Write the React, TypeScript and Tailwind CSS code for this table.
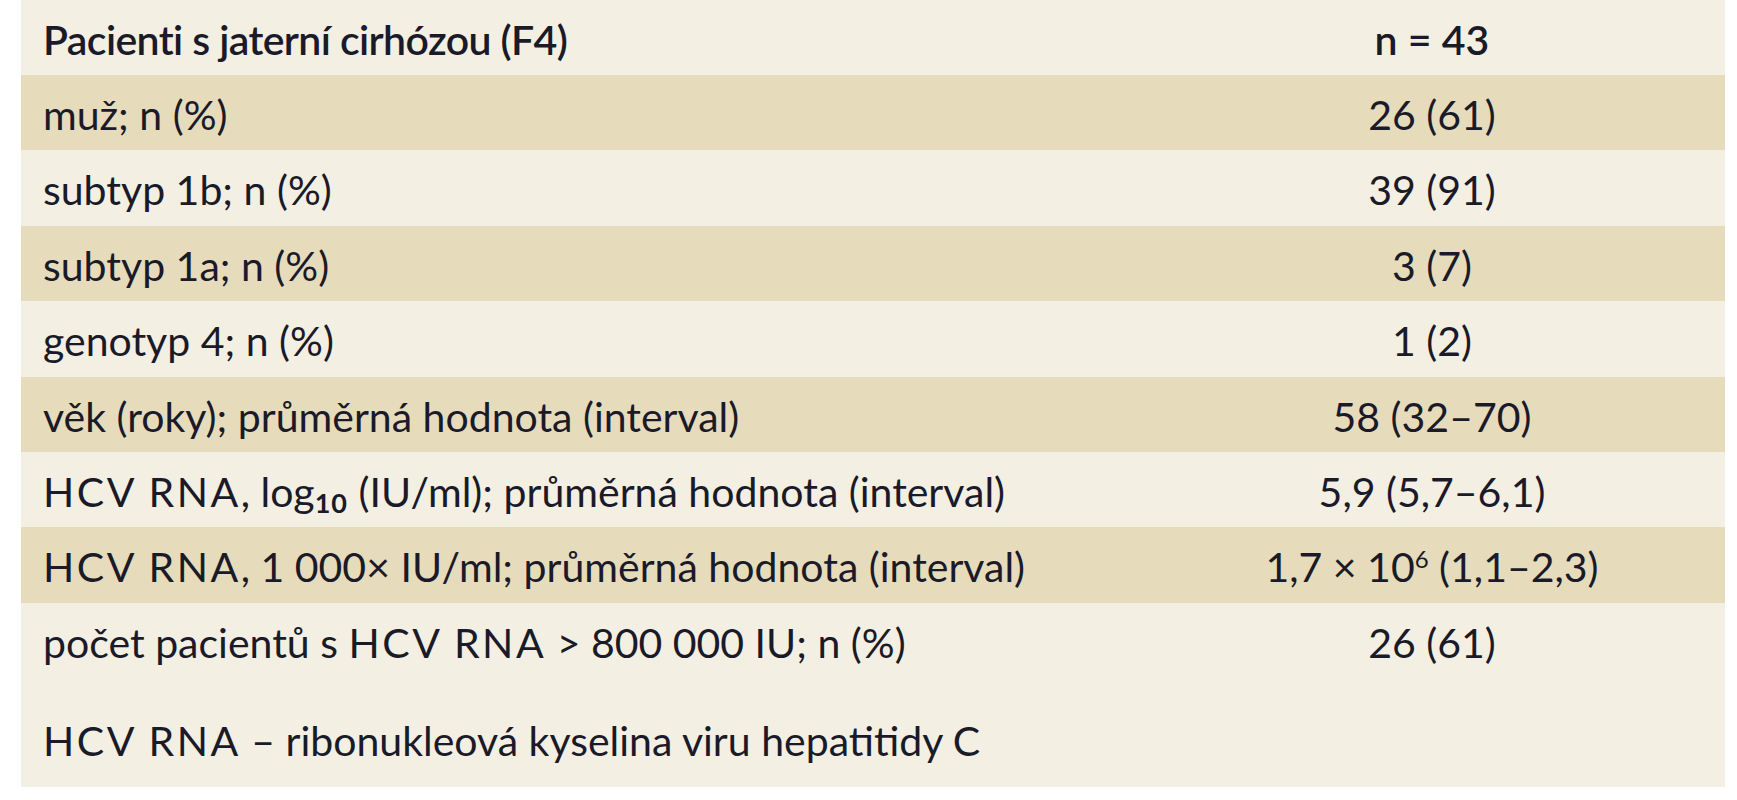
import React from 'react';

interface Row {
  label: React.ReactNode;
  value: React.ReactNode;
}

const rows: Row[] = [
  { label: 'muž; n (%)', value: '26 (61)' },
  { label: 'subtyp 1b; n (%)', value: '39 (91)' },
  { label: 'subtyp 1a; n (%)', value: '3 (7)' },
  { label: 'genotyp 4; n (%)', value: '1 (2)' },
  { label: 'věk (roky); průměrná hodnota (interval)', value: '58 (32–70)' },
  {
    label: (
      <>
        <span className="tracking-[2.5px]">HCV RNA</span>, log<sub className="text-[27px] font-bold align-baseline relative top-[6px] tracking-[1px]">10</sub> (IU/ml); průměrná hodnota (interval)
      </>
    ),
    value: '5,9 (5,7–6,1)',
  },
  {
    label: (
      <>
        <span className="tracking-[2.5px]">HCV RNA</span>, 1 000× IU/ml; průměrná hodnota (interval)
      </>
    ),
    value: (
      <>
        1,7 × 10<sup className="text-[24px] align-baseline relative -top-[14px]">6</sup> (1,1–2,3)
      </>
    ),
  },
  {
    label: (
      <>
        počet pacientů s <span className="tracking-[2.5px]">HCV RNA</span> &gt; 800 000 IU; n (%)
      </>
    ),
    value: '26 (61)',
  },
];

export default function App() {
  return (
    <div className="min-h-screen bg-white pl-[21px] pr-[12px] font-['Lato',sans-serif] text-[41px] text-[#1a1a28]">
      <div className="w-[1704px]">
        {/* Hlavička */}
        <div className="flex h-[75px] items-center bg-[#f3efe3] pt-[4px]">
          <div className="w-[1118px] pl-[22px] font-semibold tracking-[-0.6px]">Pacienti s jaterní cirhózou (F4)</div>
          <div className="w-[586px] text-center font-semibold">n = 43</div>
        </div>

        {rows.map((row, i) => (
          <div
            key={i}
            className={`flex h-[75.4px] items-center pt-[4px] ${i % 2 === 0 ? 'bg-[#e6dcbc]' : 'bg-[#f3efe3]'}`}
          >
            <div className="w-[1118px] pl-[22px]">{row.label}</div>
            <div className="w-[586px] text-center">{row.value}</div>
          </div>
        ))}

        {/* Poznámka */}
        <div className="h-[109px] bg-[#f3efe3] pl-[22px] pt-[32px]">
          <span className="tracking-[2.5px]">HCV RNA</span> – ribonukleová kyselina viru hepatitidy C
        </div>
      </div>
    </div>
  );
}
